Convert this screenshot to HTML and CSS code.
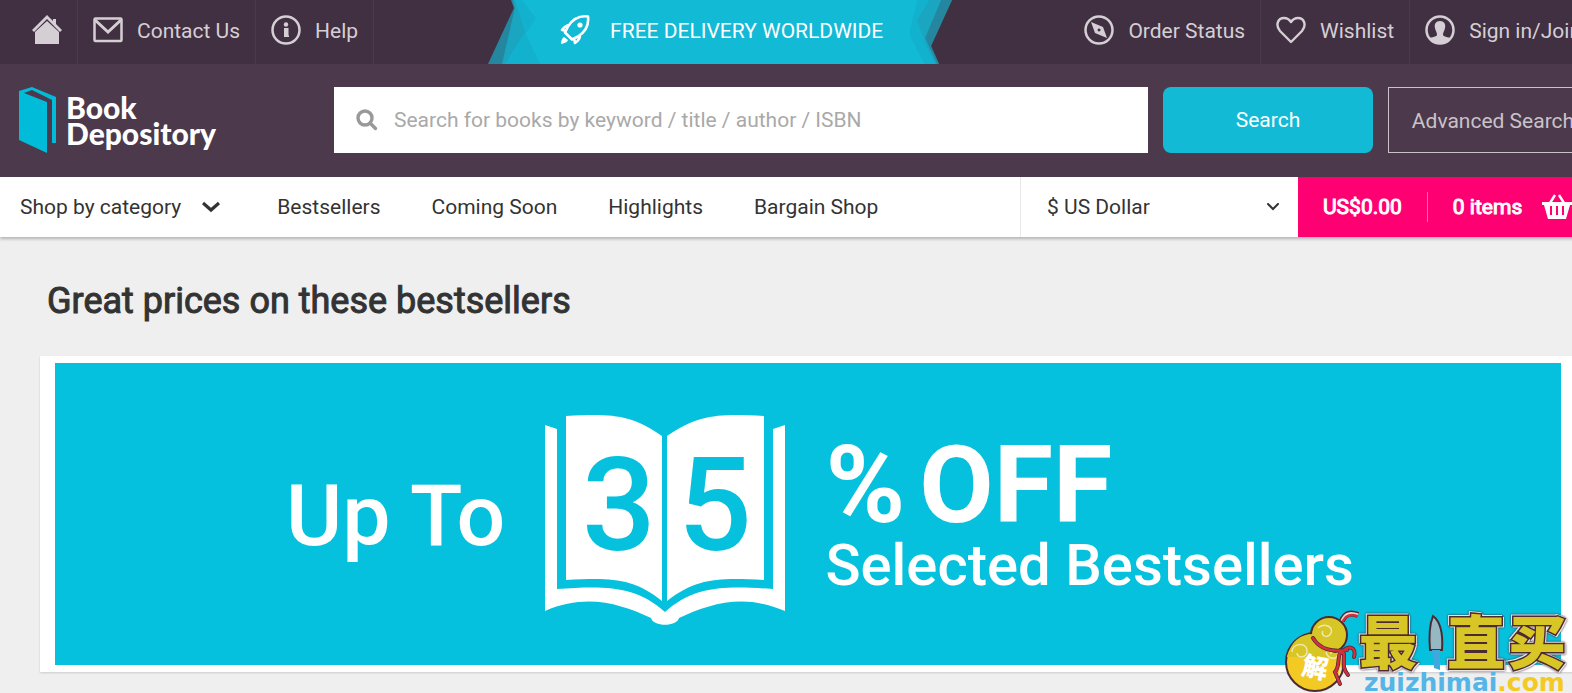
FILE: index.html
```html
<!DOCTYPE html>
<html lang="en">

<head>
	<meta charset="UTF-8" />
	<meta name="viewport" content="width=device-width, initial-scale=1.0" />
	<title>Book Depository</title>
	<link rel="stylesheet" href="styles.css">
</head>

<body>
	<div class="page">
		<header>
			<nav class="top-bar">
				<a class="top-link" href="#" aria-label="Home">
					<svg class="icon" viewBox="0 0 30 30"><path fill="currentColor" d="M15 0 21 6V4h3v5l6 6-2 2L15 4 2 17l-2-2zM15 6l12 11v12H3V17z" /></svg>
				</a>
				<a class="top-link" href="#">
					<svg class="icon" viewBox="0 0 30 30"><g fill="none" stroke="currentColor" stroke-width="2.500"><rect x="1.500" y="3.500" width="27" height="22.500" rx="1" /><path stroke-width="3" d="M2 5l13 12L28 5" /></g></svg>
					Contact Us
				</a>
				<a class="top-link" href="#">
					<svg class="icon" viewBox="0 0 30 30"><circle cx="15" cy="15" r="13.500" fill="none" stroke="currentColor" stroke-width="2.500" /><circle cx="15" cy="9.500" r="2.200" fill="currentColor" /><path fill="currentColor" d="M13 13h4.500v7.500H18V22h-5z" /></svg>
					Help
				</a>
				<div class="ribbon">
					<svg class="ribbon-bg" viewBox="0 0 466 64" preserveAspectRatio="none">
						<path fill="#25869f" d="M23 0H465L444 46 452 64H0L26 8z" />
						<path fill="#1aa5c1" d="M25 0H454L438 38 450 64H14L27 8z" />
						<path fill="#12b2ce" d="M27 0H442L430 20 439 46 448 64H17L37 32z" />
						<path fill="#12bad6" d="M34 0H430L422 34 437 64H52L38 34 48 18z" />
					</svg>
					<svg class="icon" viewBox="0 0 30 30"><g fill="none" stroke="currentColor" stroke-width="2.600" stroke-linejoin="round"><path d="M28 1.500c-8-1-15 2-20 10l-3 6 7 7 6-3c8-5 11-12 10-20zM10 10c-4 0-6 2-8 5l5 1M20 20c0 4-2 6-5 8l-1-5" /></g><circle cx="20" cy="10" r="2.600" fill="currentColor" /><path fill="currentColor" d="M4 22l4 3c-1 3-4 3-7 4 0-3 1-6 3-7z" /></svg>
					FREE DELIVERY WORLDWIDE
				</div>
				<a class="top-link first-right" href="#">
					<svg class="icon" viewBox="0 0 30 30"><circle cx="15" cy="15" r="13.500" fill="none" stroke="currentColor" stroke-width="2.500" /><path fill="currentColor" fill-rule="evenodd" d="M7 7l12 5 4 11-12-5zM15 13.500a1.500 1.500 0 1 0 .1 0z" /></svg>
					Order Status
				</a>
				<a class="top-link" href="#">
					<svg class="icon" viewBox="0 0 30 30"><path fill="none" stroke="currentColor" stroke-width="2.400" stroke-linejoin="round" d="M15 27 4 16C-1 10 2 3 8 3c3 0 5 1 7 4 2-3 4-4 7-4 6 0 9 7 4 13z" /></svg>
					Wishlist
				</a>
				<a class="top-link" href="#">
					<svg class="icon" viewBox="0 0 30 30"><circle cx="15" cy="15" r="13.500" fill="none" stroke="currentColor" stroke-width="2.500" /><path fill="currentColor" d="M15 6c4 0 6 3 5 7-.5 3-2 4-2 7 1 2 5 2 8 3-6 7-16 7-22 0 3-1 7-1 8-3 0-3-1.500-4-2-7-1-4 1-7 5-7z" /></svg>
					Sign in/Join
				</a>
			</nav>

			<div class="header-content">
				<a class="logo" href="#">
					<svg class="logo-book" viewBox="0 0 37 66"><path fill="#00bcd9" fill-rule="evenodd" d="M0 4 13 0 37 10V56H33V13L13 3 5 6 28 15V66L0 53z" /></svg>
					<span>Book<br>Depository</span>
				</a>
				<form class="search-form">
					<div class="search-box">
						<svg class="search-icon" viewBox="0 0 22 22"><g fill="none" stroke="#999" stroke-width="3.400" stroke-linecap="round"><circle cx="9" cy="9" r="7" /><path d="M14.500 14.500 19.500 19.500" /></g></svg>
						<input type="text" class="search-input" aria-label="Search" placeholder="Search for books by keyword / title / author / ISBN" />
					</div>
					<button type="submit" class="search-button">Search</button>
					<a class="advanced-search" href="#">Advanced Search</a>
				</form>
			</div>

			<nav class="main-nav">
				<a class="category-link" href="#">
					Shop by category
					<svg class="chevron" viewBox="0 0 18 12"><path fill="none" stroke="currentColor" stroke-width="3.200" d="M1 2l8 7 8-7" /></svg>
				</a>
				<a href="#">Bestsellers</a>
				<a href="#">Coming Soon</a>
				<a href="#">Highlights</a>
				<a href="#">Bargain Shop</a>
				<div class="currency">
					<select class="currency-select" aria-label="Currency">
						<option>$ US Dollar</option>
					</select>
					<svg class="currency-arrow" viewBox="0 0 12 8"><path fill="none" stroke="currentColor" stroke-width="2" stroke-linecap="round" d="M1 1l5 5 5-5" /></svg>
				</div>
				<a class="basket" href="#">
					<span class="basket-total">US$0.00</span>
					<span class="basket-items">0 items</span>
					<svg class="basket-icon" viewBox="0 0 30 26"><g fill="none" stroke="currentColor" stroke-width="2.400"><path d="M8 9l5-8M22 9l-5-8" /></g><path fill="currentColor" fill-rule="evenodd" d="M0 8h30v3h-2l-4 14H6L2 11H0zM8 12v9h2v-9zM14 12v9h2v-9zM20 12v9h2v-9z" /></svg>
				</a>
			</nav>
		</header>

		<main>
			<h1>Great prices on these bestsellers</h1>
			<div class="card">
				<a class="banner" href="#">
					<span class="up-to">Up To</span>
					<svg class="open-book" viewBox="0 0 240 210">
						<path fill="#fff" d="M0 10 12 14V174C58 171 90 170 120 197 150 170 182 171 228 174V14L240 10V196C198 178 165 189 134 203 132 212 108 212 106 203 75 189 42 178 0 196z" />
						<path fill="#fff" d="M21 1C62-1 85-2 117 21V186C87 162 64 163 21 165zM219 1C178-1 155-2 122 21V186C153 162 176 163 219 165z" />
						<text class="digit" x="37" y="135">3</text>
						<text class="digit" x="133" y="135">5</text>
					</svg>
					<span class="offer">
						<span class="off"><span>%</span><span>OFF</span></span>
						<span class="selected">Selected Bestsellers</span>
					</span>
				</a>
			</div>
		</main>
	</div>

	<svg class="site-badge" viewBox="0 0 290 83">
		<g stroke="#4b2a33" stroke-width="2">
			<circle cx="33" cy="52" r="29" fill="#f3ca24" />
			<circle cx="47" cy="25" r="18" fill="#d8c526" />
		</g>
		<path fill="#d8c526" d="M5 46Q12 24 31 24L42 40 58 44V47H5z" />
		<g fill="none" stroke="#eee8b0" stroke-width="1.500"><path d="M36 18c6-6 16-1 13 5s-11 3-8-2M10 42c0-9 14-10 15-2s-10 9-10 3M44 42c2 8 12 8 12 2s-8-5-7 0M57 54c3 6 0 12-4 16" /></g>
		<path fill="none" stroke="#4b2a33" stroke-width="6" d="M60 11c3-8 9-9 16-6" />
		<path fill="none" stroke="#e8d4d4" stroke-width="3" d="M60 11c3-8 9-9 16-6" />
		<g fill="none" stroke="#4b2a33" stroke-width="4" stroke-linecap="round"><path d="M31 28c7 12 19 14 34 12M58 42c-3 10 0 14-5 20l5 12M60 43c6-9 15-6 12 4M62 44c0 8-2 14 4 21" /></g>
		<g fill="none" stroke="#d62f3b" stroke-width="2.500" stroke-linecap="round"><path d="M61 11c3-6 8-7 14-5M31 28c7 12 19 14 34 12M58 42c-3 10 0 14-5 20l5 12M60 43c6-9 15-6 12 4M62 44c0 8-2 14 4 21" /></g>
		<text class="badge-seal" x="20" y="67" transform="rotate(12 33 58)">解</text>
		<g class="badge-name"><text x="77" y="54">最</text><text x="165" y="54">直</text><text x="226" y="54">买</text></g>
		<path fill="#95b8c3" stroke="#4b2a33" stroke-width="2" d="M151 6c8 6 10 20 9 34h-12c-1-12-1-24 3-34z" />
		<path fill="#3fa9de" d="M150 40h8v20l-6-2z" />
		<text class="badge-url" x="82" y="81">zuizhimai<tspan class="badge-com">.com</tspan></text>
	</svg>
</body>

</html>
```
FILE: styles.css
```css
* {
	box-sizing: border-box;
}

body {
	position: relative;
	margin: 0;
	min-height: 100vh;
	background-color: #efefef;
	color: #333;
	font-family: Roboto, sans-serif;
	font-size: 21px;
	line-height: 30px;
	overflow: hidden;
}

a {
	color: inherit;
	text-decoration: none;
}

svg {
	display: block;
	flex-shrink: 0;
}

/* the header runs a little past the window edge */
.page {
	width: calc(100% + 30px);
}

.top-bar {
	display: flex;
	height: 64px;
	padding: 0 6px 0 17px;
	background-color: #413041;
	color: #d5cfd5;
	white-space: nowrap;
}

.top-link {
	display: flex;
	align-items: center;
	gap: 14px;
	padding: 0 15px 2px;
	border-right: 1px solid #4c394c;
}

.top-link:last-child {
	border-right: none;
}

.icon {
	width: 30px;
	height: 30px;
	margin-bottom: 2px;
}

.ribbon {
	position: relative;
	display: flex;
	align-items: center;
	gap: 20px;
	margin-left: 114px;
	padding: 0 70px 2px 72px;
	color: #fff;
	isolation: isolate;
}

.ribbon-bg {
	position: absolute;
	inset: 0;
	width: 100%;
	height: 100%;
	z-index: -1;
}

.first-right {
	margin-left: auto;
}

.header-content {
	display: flex;
	align-items: center;
	height: 113px;
	padding: 0 4px 2px 19px;
	background-color: #4c394c;
}

.logo {
	display: flex;
	align-items: center;
	gap: 10px;
	width: 315px;
	color: #fff;
	font-family: Lato, sans-serif;
	font-size: 30px;
	font-weight: 900;
	line-height: 26px;
}

.logo-book {
	width: 37px;
	height: 66px;
}

.search-form {
	display: flex;
	flex: 1;
	gap: 15px;
}

.search-box {
	display: flex;
	flex: 1;
	align-items: center;
	gap: 16px;
	height: 66px;
	padding: 0 22px;
	background-color: #fff;
}

.search-icon {
	width: 22px;
	height: 22px;
}

.search-input {
	flex: 1;
	height: 60px;
	padding: 0;
	border: none;
	outline: none;
	font: inherit;
}

.search-input::placeholder {
	color: #a9a9a9;
}

.search-button {
	width: 210px;
	height: 66px;
	border: none;
	border-radius: 8px;
	background-color: #12bad6;
	color: #fff;
	font: inherit;
	cursor: pointer;
}

.advanced-search {
	width: 210px;
	height: 66px;
	border: 1px solid #c9c2c9;
	color: #c9c2c9;
	line-height: 66px;
	text-align: center;
}

.main-nav {
	display: flex;
	align-items: center;
	gap: 51px;
	height: 60px;
	padding-left: 20px;
	background-color: #fff;
	box-shadow: 0 2px 3px rgba(0, 0, 0, 0.25);
	white-space: nowrap;
}

.category-link {
	display: flex;
	align-items: center;
	gap: 21px;
	margin-right: 6px;
}

.chevron {
	width: 18px;
	height: 12px;
}

.currency {
	display: flex;
	align-items: center;
	width: 278px;
	height: 60px;
	margin-left: auto;
	padding: 0 19px 0 26px;
	border-left: 1px solid #e8e8e8;
}

.currency-select {
	flex: 1;
	padding: 0;
	border: none;
	background: none;
	color: inherit;
	font: inherit;
	appearance: none;
}

.currency-arrow {
	width: 12px;
	height: 8px;
}

.basket {
	display: flex;
	align-items: center;
	width: 304px;
	height: 60px;
	margin-left: -51px;
	padding-left: 25px;
	background-color: #ff0073;
	color: #fff;
	-webkit-text-stroke: 1px #fff;
}

.basket-total {
	padding-right: 25px;
	border-right: 1px solid #ff66ab;
}

.basket-items {
	padding: 0 20px 0 25px;
}

.basket-icon {
	width: 30px;
	height: 26px;
}

main {
	padding: 41px 26px 0 40px;
}

h1 {
	margin: 0 0 31px;
	padding-left: 7px;
	font-size: 36px;
	font-weight: 400;
	line-height: 47px;
	-webkit-text-stroke: 1px #333;
}

.card {
	padding: 7px 15px;
	background-color: #fff;
	box-shadow: 0 1px 2px rgba(0, 0, 0, 0.15);
}

.banner {
	display: flex;
	align-items: center;
	justify-content: center;
	gap: 40px;
	height: 302px;
	padding-left: 24px;
	background-color: #05c1dd;
	color: #fff;
	font-weight: 500;
	white-space: nowrap;
}

.up-to {
	padding-top: 4px;
	font-size: 86px;
	line-height: 104px;
}

.open-book {
	width: 240px;
	height: 210px;
	margin-top: 12px;
}

.digit {
	fill: #05c1dd;
	font-size: 130px;
	font-weight: 500;
}

.offer {
	display: flex;
	flex-direction: column;
	margin-top: 2px;
}

.off {
	display: flex;
	gap: 14px;
	font-size: 108px;
	font-weight: 700;
	line-height: 100px;
}

.selected {
	font-size: 58px;
	line-height: 60px;
}

.site-badge {
	position: absolute;
	right: 0;
	bottom: 0;
	width: 290px;
	height: 83px;
}

.badge-seal {
	fill: #fff;
	font-family: "Noto Sans CJK SC", sans-serif;
	font-size: 26px;
	font-weight: 900;
}

.badge-name {
	fill: #d8c526;
	stroke: #4b2a33;
	stroke-width: 3px;
	paint-order: stroke;
	font-family: "Noto Sans CJK SC", sans-serif;
	font-size: 58px;
	font-weight: 900;
	filter: drop-shadow(1px 1px 0 #e8e4e8) drop-shadow(-1px -1px 0 #e8e4e8) drop-shadow(0 0 1px #4b2a33);
}

.badge-url {
	fill: #55b5e6;
	font-family: "DejaVu Sans", sans-serif;
	font-size: 25px;
	font-weight: 700;
}

.badge-com {
	fill: #f3ca24;
}
```
